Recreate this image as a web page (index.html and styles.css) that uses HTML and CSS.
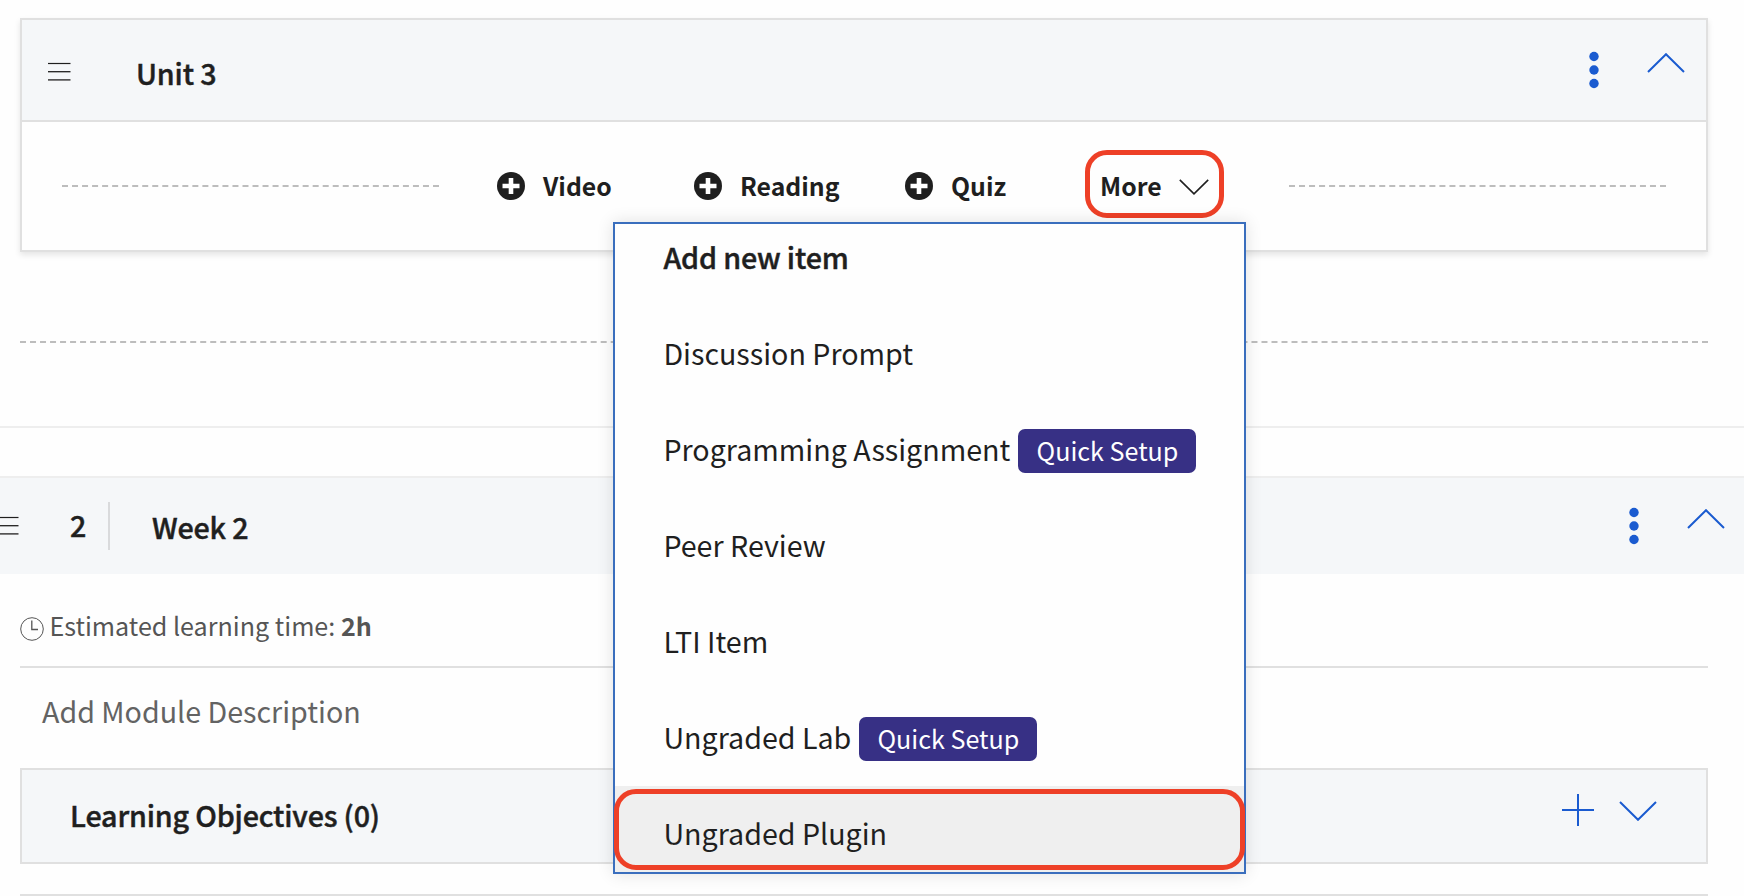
FILE: index.html
```html
<!DOCTYPE html>
<html lang="en">
<head>
<meta charset="utf-8">
<title>Course editor</title>
<link rel="stylesheet" href="styles.css">
</head>
<body>
<section class="unit">
  <header class="unit-head">
    <svg class="grip" width="24" height="20" viewBox="0 0 24 20"><path d="M0 1.5h22.5" stroke="#1f1f1f" stroke-width="1.2"/><path d="M0 9.7h22.5" stroke="#1f1f1f" stroke-width="1.3"/><path d="M0 17.9h22.5" stroke="#1f1f1f" stroke-width="1.3"/></svg>
    <h2 class="title unit-title">Unit 3</h2>
    <svg class="dots" width="12" height="38" viewBox="0 0 12 38"><circle cx="6" cy="5.5" r="4.7"/><circle cx="6" cy="19" r="4.7"/><circle cx="6" cy="32.5" r="4.7"/></svg>
    <svg class="chev" width="38" height="20" viewBox="0 0 38 20"><path d="M1 19 19 1.2 37 19"/></svg>
  </header>
  <div class="add-row">
    <span class="dash"></span>
    <div class="add"><svg width="28" height="28" viewBox="0 0 28 28"><circle cx="14" cy="14" r="14" fill="#1f1f1f"/><path d="M5.5 14h17M14 6v16" stroke="#fff" stroke-width="4.6"/></svg><span>Video</span></div>
    <div class="add"><svg width="28" height="28" viewBox="0 0 28 28"><circle cx="14" cy="14" r="14" fill="#1f1f1f"/><path d="M5.5 14h17M14 6v16" stroke="#fff" stroke-width="4.6"/></svg><span>Reading</span></div>
    <div class="add"><svg width="28" height="28" viewBox="0 0 28 28"><circle cx="14" cy="14" r="14" fill="#1f1f1f"/><path d="M5.5 14h17M14 6v16" stroke="#fff" stroke-width="4.6"/></svg><span>Quiz</span></div>
    <div class="more"><span>More</span><svg width="30" height="16" viewBox="0 0 30 16"><path d="M.8.9 15 14.8 29.2.9" fill="none" stroke="#1f1f1f" stroke-width="1.6"/></svg></div>
    <span class="dash"></span>
  </div>
</section>
<div class="week-add"></div>
<div class="rule"></div>
<header class="week-head">
  <svg class="grip" width="19" height="20" viewBox="0 0 19 20"><path d="M0 1.5h18.5" stroke="#1f1f1f" stroke-width="1.2"/><path d="M0 9.7h18.5" stroke="#1f1f1f" stroke-width="1.3"/><path d="M0 17.9h18.5" stroke="#1f1f1f" stroke-width="1.3"/></svg>
  <span class="title week-no">2</span>
  <span class="divider"></span>
  <h2 class="title week-title">Week 2</h2>
  <svg class="dots" width="12" height="38" viewBox="0 0 12 38"><circle cx="6" cy="5.5" r="4.7"/><circle cx="6" cy="19" r="4.7"/><circle cx="6" cy="32.5" r="4.7"/></svg>
  <svg class="chev" width="38" height="20" viewBox="0 0 38 20"><path d="M1 19 19 1.2 37 19"/></svg>
</header>
<main class="module">
  <div class="time"><svg width="24" height="24" viewBox="0 0 24 24" fill="none" stroke="#555"><circle cx="12" cy="12" r="11.3" stroke-width="1"/><path d="M11.8 3.5v9h6.2" stroke-width="1.3"/></svg><span class="time-text">Estimated learning time: <b>2h</b></span></div>
  <p class="desc">Add Module Description</p>
  <div class="objectives">
    <h3 class="title obj-title">Learning Objectives (0)</h3>
    <svg class="plus" width="32" height="32" viewBox="0 0 32 32"><path d="M0 16h32M16 0v32"/></svg>
    <svg class="chev" width="38" height="20" viewBox="0 0 38 20"><path d="M1 1 19 18.8 37 1"/></svg>
  </div>
  <div class="end"></div>
</main>
<div class="menu">
  <div class="menu-title title">Add new item</div>
  <div class="item">Discussion Prompt</div>
  <div class="item">Programming Assignment<span class="badge">Quick Setup</span></div>
  <div class="item">Peer Review</div>
  <div class="item">LTI Item</div>
  <div class="item">Ungraded Lab<span class="badge">Quick Setup</span></div>
  <div class="item active">Ungraded Plugin<span class="ring"></span></div>
</div>
</body>
</html>
```
FILE: styles.css
```css
* { box-sizing: border-box; }
body {
  margin: 0;
  width: 1744px;
  height: 896px;
  overflow: hidden;
  position: relative;
  background: #fefefe;
  color: #1f1f1f;
  font-family: "Noto Sans CJK SC", "Noto Sans", sans-serif;
  font-size: 28.65px;
}
h2, h3, p { margin: 0; }
svg { display: block; flex: none; }
.title {
  font-size: 28.7px;
  font-weight: 500;
  letter-spacing: -.17px;
  white-space: nowrap;
  -webkit-text-stroke: .45px #1f1f1f;
}
.dots { fill: #1a5bd0; }
.chev, .plus { fill: none; stroke: #1a5bd0; stroke-width: 2; }

.unit {
  margin: 18px 36px 0 20px;
  height: 234px;
  border: 2px solid #e0e0e0;
  box-shadow: 0 3px 6px rgba(0, 0, 0, .1);
}
.unit-head {
  height: 102px;
  display: flex;
  align-items: flex-start;
  background: #f5f7f9;
  border-bottom: 2px solid #e0e0e0;
  padding: 0 21px 0 26px;
}
.unit-head .grip { margin-top: 42px; }
.unit-title { line-height: 105px; margin-left: 64px; flex: 1; }
.unit-head .dots { margin-top: 31px; }
.unit-head .chev { margin: 33px 0 0 47px; }

.add-row {
  height: 128px;
  padding: 0 40px;
  display: grid;
  grid-template-columns: 435px 197px 211px 180px 204px 377px;
  align-items: center;
  font-size: 24.8px;
  font-weight: 700;
}
.dash { width: 377px; border-top: 2px dashed #bdbdbd; }
.add { display: flex; align-items: center; gap: 18px; }
.add span { line-height: 28px; margin-top: -2px; }
.more {
  width: 139px;
  height: 68px;
  margin-top: -4px;
  border: 5px solid #ee4027;
  border-radius: 22px;
  display: flex;
  align-items: center;
  justify-content: space-between;
  padding: 2px 10px 0 10px;
}
.more svg { margin-top: 4px; }

.week-add { margin: 89px 36px 0 20px; height: 85px; border-top: 2px dashed #bdbdbd; }
.rule { height: 50px; border-top: 2px solid #eee; }
.week-head {
  height: 98px;
  display: flex;
  align-items: flex-start;
  background: #f5f7f9;
  border-top: 2px solid #eee;
  padding-right: 19px;
}
.week-head .grip { margin-top: 38px; }
.week-no { width: 89px; padding-left: 51px; line-height: 93px; }
.divider { width: 2px; height: 48px; margin-top: 24px; background: #d9dadc; }
.week-title { line-height: 97px; margin-left: 42px; flex: 1; }
.week-head .dots { margin-top: 29px; }
.week-head .chev { margin: 31px 0 0 47px; }

.module { padding: 0 36px 0 20px; }
.time {
  height: 94px;
  display: flex;
  align-items: flex-start;
  border-bottom: 2px solid #e0e0e0;
  color: #555;
  font-size: 25.1px;
}
.time svg { margin-top: 43px; }
.time-text { margin-left: 5.5px; line-height: 102px; white-space: nowrap; }
.desc { height: 100px; padding-left: 22px; line-height: 85px; color: #636363; }
.objectives {
  height: 96px;
  border: 2px solid #e0e0e0;
  background: #f5f7f9;
  display: flex;
  align-items: flex-start;
  padding: 0 49px 0 48px;
}
.obj-title { flex: 1; line-height: 89px; }
.plus { margin-top: 24px; }
.objectives .chev { margin: 31px 0 0 25px; }
.end { margin-top: 30px; height: 2px; background: #e0e0e0; }

.menu {
  position: absolute;
  left: 613px;
  top: 222px;
  width: 633px;
  height: 652px;
  border: 2px solid #3a6ebd;
  background: #fefefe;
  box-shadow: 0 0 16px rgba(0, 0, 0, .12);
}
.menu-title { height: 82px; padding-left: 48.4px; line-height: 65px; }
.item { height: 96px; padding: 0 0 3px 48.4px; display: flex; align-items: center; white-space: nowrap; }
.badge {
  width: 178px;
  height: 44px;
  margin: 5px 0 0 8.1px;
  border-radius: 7px;
  background: #373085;
  color: #fff;
  font-size: 25.1px;
  line-height: 43px;
  text-align: center;
}
.active { position: relative; height: 86px; line-height: 93px; align-items: flex-start; background: #efefef; }
.ring {
  position: absolute;
  left: -1px;
  top: 3px;
  width: 631px;
  height: 81px;
  border: 5px solid #ee4027;
  border-radius: 22px;
}
```
